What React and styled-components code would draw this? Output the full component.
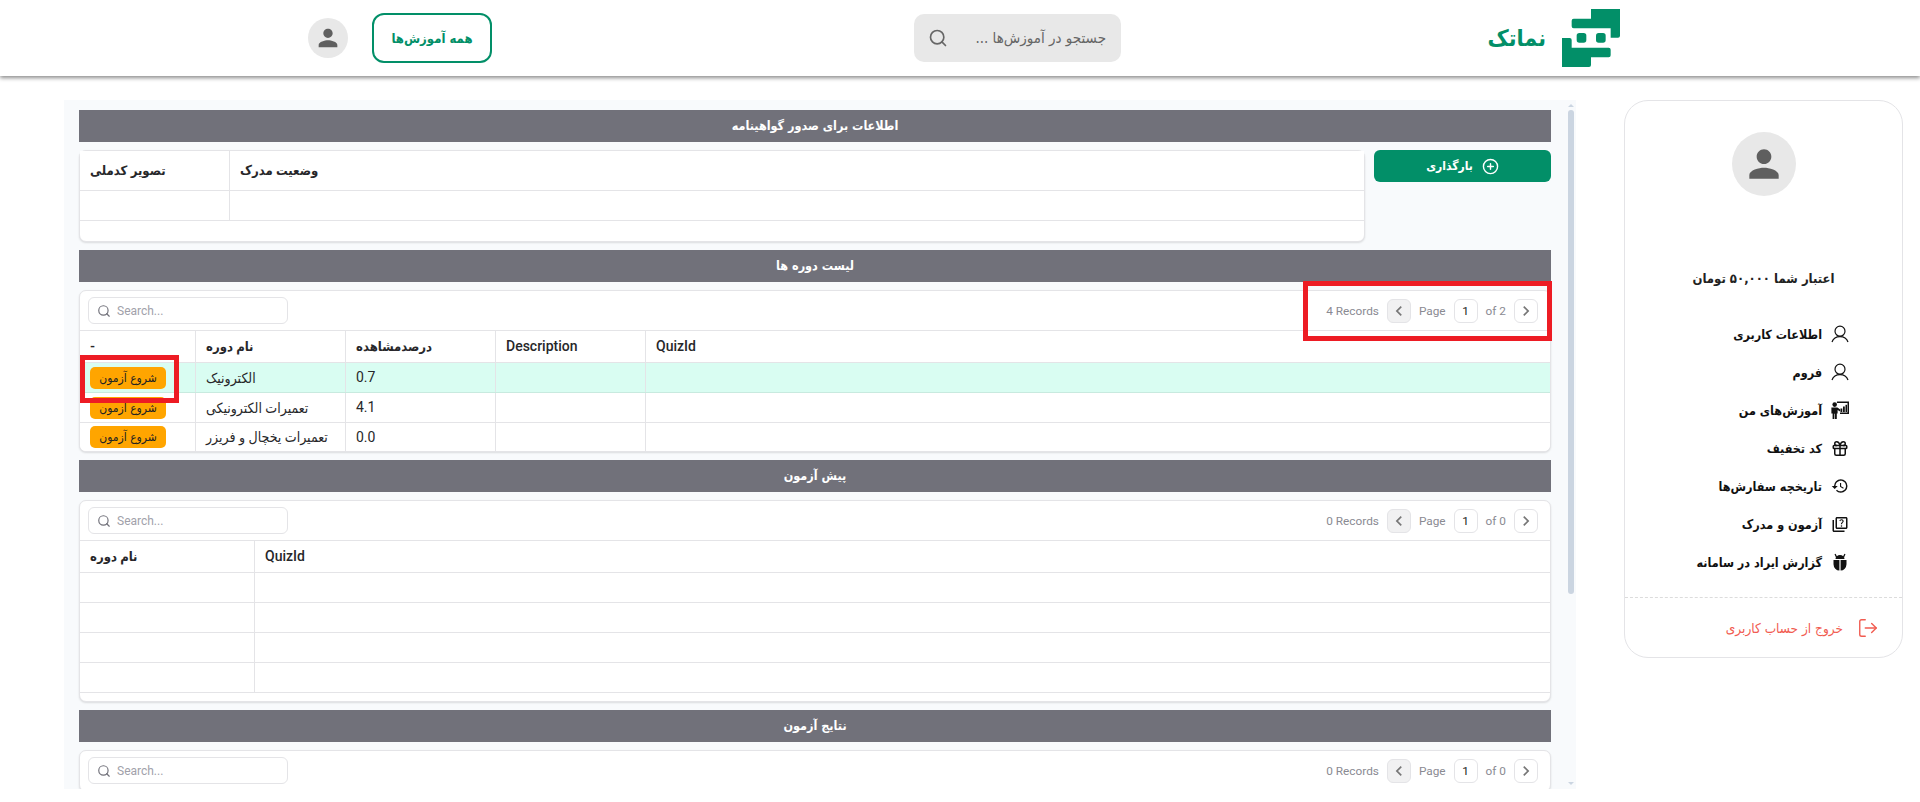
import React from 'react';
import styled, { createGlobalStyle } from 'styled-components';
import { MdPerson, MdHistory, MdOutlineQuiz, MdChevronLeft, MdChevronRight } from 'react-icons/md';
import { LuCirclePlus, LuSearch, LuLogOut, LuGift } from 'react-icons/lu';

const persian = '"DejaVu Sans Condensed", "DejaVu Sans", sans-serif';

const GlobalStyle = createGlobalStyle`
  html, body {
    margin: 0;
    height: 100%;
    overflow: hidden;
    background: #fff;
    font-family: Roboto, "DejaVu Sans Condensed", "DejaVu Sans", sans-serif;
  }
  * { box-sizing: border-box; }
`;

const Page = styled.div`
  height: 802px;
  display: flex;
  flex-direction: column;
`;

const TopBar = styled.header`
  height: 76px;
  flex: none;
  display: flex;
  align-items: center;
  padding: 0 300px 0 308px;
  background: #fff;
  box-shadow: 0 2px 4px rgba(0, 0, 0, 0.45);
  position: relative;
  z-index: 2;
`;

const Avatar = styled.div`
  width: ${p => p.$size}px;
  height: ${p => p.$size}px;
  border-radius: 50%;
  background: #e8e8e8;
  color: #5f5f5f;
  display: flex;
  align-items: center;
  justify-content: center;
  flex: none;
`;

const AllCourses = styled.button`
  width: 120px;
  height: 50px;
  margin-left: 24px;
  background: #fff;
  border: 2px solid #028f68;
  border-radius: 12px;
  color: #028f68;
  font: 700 13px ${persian};
  direction: rtl;
`;

const TopSearch = styled.div`
  width: 207px;
  height: 48px;
  margin-left: 422px;
  padding: 0 15px 0 14px;
  border-radius: 10px;
  background: #e8e8e8;
  color: #666;
  display: flex;
  align-items: center;
  justify-content: space-between;
  font: 400 15px ${persian};
  direction: ltr;
`;

const Brand = styled.div`
  margin-left: auto;
  display: flex;
  align-items: center;
  gap: 16px;
  color: #028f68;
  font: 700 23px ${persian};
`;

const Body = styled.div`
  flex: 1;
  min-height: 0;
  display: flex;
  align-items: flex-start;
  padding: 24px 17px 13px 64px;
  gap: 48px;
`;

const Panel = styled.main`
  width: 1512px;
  height: 689px;
  flex: none;
  display: flex;
  background: #f8fafc;
  overflow: hidden;
`;

const PanelContent = styled.div`
  width: 1504px;
  padding: 10px 17px 0 15px;
  display: flex;
  flex-direction: column;
  gap: 8px;
`;

const Scrollbar = styled.div`
  width: 8px;
  display: flex;
  flex-direction: column;
  align-items: center;
  justify-content: space-between;
  padding: 4px 0 4px;
  margin-left: -1px;
`;

const ScrollThumb = styled.div`
  width: 6px;
  height: 484px;
  margin-top: 3px;
  margin-bottom: auto;
  border-radius: 3px;
  background: #cbd5e1;
`;

const ScrollArrow = styled.div`
  width: 0;
  height: 0;
  border-left: 3px solid transparent;
  border-right: 3px solid transparent;
  ${p => (p.$down ? 'border-top: 3px solid #cbd5e1;' : 'border-bottom: 3px solid #cbd5e1;')}
`;

const SectionTitle = styled.div`
  height: 32px;
  flex: none;
  padding-bottom: 2px;
  background: #71717a;
  color: #fff;
  display: flex;
  align-items: center;
  justify-content: center;
  font: 700 12.500px ${persian};
  direction: rtl;
`;

const Row = styled.div`
  display: flex;
  gap: 9px;
  align-items: flex-start;
`;

const Card = styled.section`
  flex: ${p => (p.$fill ? '1' : 'none')};
  min-width: 0;
  position: relative;
  background: #fff;
  border: 1px solid #e4e4e7;
  border-radius: 7px;
  box-shadow: 0 1px 2px rgba(0, 0, 0, 0.12);
  padding-bottom: ${p => p.$pad || 0}px;
`;

const UploadButton = styled.button`
  width: 177px;
  height: 32px;
  flex: none;
  border: 0;
  border-radius: 6px;
  background: #028f68;
  color: #fff;
  display: flex;
  align-items: center;
  justify-content: center;
  gap: 9px;
  font: 700 12px ${persian};
  direction: rtl;
`;

const Toolbar = styled.div`
  height: 40px;
  padding: 0 12px 0 8px;
  display: flex;
  align-items: center;
  justify-content: space-between;
  border-bottom: 1px solid #e4e4e7;
`;

const SearchBox = styled.div`
  width: 200px;
  height: 27px;
  padding: 0 8px;
  display: flex;
  align-items: center;
  gap: 6px;
  background: #fff;
  border: 1px solid #e4e4e7;
  border-radius: 6px;
  color: #71717a;
  font-size: 12px;
`;

const SearchHint = styled.span`
  color: #a1a1aa;
`;

const Pager = styled.div`
  display: flex;
  align-items: center;
  gap: 8px;
  font-size: 11.800px;
  color: #8a8a92;
`;

const PageButton = styled.div`
  width: 24px;
  height: 24px;
  display: flex;
  align-items: center;
  justify-content: center;
  border: 1px solid #e4e4e7;
  border-radius: 6px;
  color: ${p => (p.$current ? '#222' : '#777')};
  background: ${p => (p.$disabled ? '#f1f1f2' : '#fff')};
`;

const TableRow = styled.div`
  display: grid;
  grid-template-columns: ${p => p.$cols};
  height: ${p => p.$height}px;
  background: ${p => (p.$active ? '#d9fdf2' : '#fff')};
  border-bottom: ${p => (p.$last ? '0' : `1px solid ${p.$active ? '#c8eadf' : '#e4e4e7'}`)};
  border-radius: ${p => (p.$last ? '0 0 6px 6px' : '0')};
`;

const Cell = styled.div`
  display: flex;
  align-items: center;
  padding: 0 10px ${p => (p.$latin ? '1px' : '0')};
  border-right: 1px solid #e4e4e7;
  color: #27272a;
  font-weight: ${p => (p.$bold ? 700 : 400)};
  font-size: ${p => (p.$bold ? '13px' : '14px')};
  white-space: nowrap;
  overflow: hidden;
  &:last-child { border-right: 0; }
`;

const LatinHead = styled(Cell)`
  font-weight: 500;
`;

const PersianCell = styled(Cell)`
  direction: rtl;
  justify-content: flex-end;
  border-right: 0;
  border-left: 0;
  box-shadow: inset -1px 0 0 #e4e4e7;
`;

const StartExam = styled.button`
  width: 76px;
  height: 22px;
  padding: 0;
  border: 0;
  border-radius: 5px;
  background: #ffa500;
  color: #222;
  font: 400 12px ${persian};
  direction: rtl;
  flex: none;
`;

const Highlight = styled.div`
  position: absolute;
  border: 5px solid #ed1c24;
  pointer-events: none;
  ${p => p.$area}
`;

const Sidebar = styled.aside`
  width: 279px;
  height: 558px;
  flex: none;
  border: 1px solid #e4e4e7;
  border-radius: 24px;
  display: flex;
  flex-direction: column;
  align-items: center;
  padding-top: 31px;
  direction: rtl;
`;

const Credit = styled.div`
  margin-top: 74px;
  font: 700 13px ${persian};
  color: #222;
  height: 18px;
  line-height: 18px;
`;

const Menu = styled.nav`
  width: 100%;
  margin-top: 35px;
  padding-right: 53px;
  display: flex;
  flex-direction: column;
  gap: 16px;
`;

const MenuItem = styled.a`
  height: 22px;
  display: flex;
  align-items: center;
  gap: 9px;
  color: #111;
  font: 700 12.500px ${persian};
`;

const MenuIcon = styled.span`
  width: 18px;
  height: 18px;
  flex: none;
  display: flex;
  align-items: center;
  justify-content: center;
`;

const Logout = styled.div`
  width: 100%;
  margin-top: 24px;
  padding-right: 23px;
  height: 61px;
  border-top: 1px dashed #dcdcdc;
  display: flex;
  align-items: center;
  gap: 14px;
  color: #f15b50;
  font: 400 13.500px ${persian};
`;

const BrandMark = () => (
  <svg width="58" height="58" viewBox="0 0 174 174" fill="#028f68">
    <path d="M87 0H174V80a6 6 0 0 1-6 6H146V58H35a6 6 0 0 1-6-6V35a6 6 0 0 1 6-6H87Z" />
    <path d="M0 87H23a6 6 0 0 1 6 6V116H140a6 6 0 0 1 6 6V139a6 6 0 0 1-6 6H87V168a6 6 0 0 1-6 6H0Z" />
    <rect x="44" y="72" width="29" height="29" rx="8" />
    <rect x="102" y="72" width="29" height="29" rx="8" />
  </svg>
);

const UserOutline = () => (
  <svg width="18" height="18" viewBox="0 0 18 18" fill="none" stroke="#111" strokeWidth="1.2">
    <circle cx="9" cy="6.200" r="5" />
    <path d="M1 17c1.200-3.400 4-5.400 8-5.400s6.800 2 8 5.400" />
  </svg>
);

const TeacherIcon = () => (
  <svg width="18" height="18" viewBox="0 0 18 18" fill="#111">
    <path d="M6 .5h12v12.500H9v-1.500h7.500V2H6Z" />
    <rect x="9.500" y="7.500" width="1.800" height="3.500" />
    <rect x="12" y="5.500" width="1.800" height="5.500" />
    <rect x="14.500" y="3.800" width="1.500" height="7.200" />
    <circle cx="3.700" cy="3.600" r="2.300" />
    <path d="M0.400 6.400H6.400L9.200 8.400V10.400L6.600 9V12.600H5.800V18H4V12.800H3.400V18H1.600V12.600H0.400Z" />
  </svg>
);

const BugIcon = () => (
  <svg width="18" height="18" viewBox="0 0 18 18" fill="#111">
    <path d="M4.500 6a4.500 4 0 0 1 9 0Z" />
    <path d="M3.500 1.200l1.100-.5 1.500 3-1.100.8ZM14.500 1.200l-1.100-.5-1.500 3 1.100.8Z" />
    <path d="M8.400 7H2.500v4.200A6 6.500 0 0 0 8.400 17.500ZM9.600 7h5.900v4.200A6 6.500 0 0 1 9.600 17.500Z" />
  </svg>
);

const menuItems = [
  { label: 'اطلاعات کاربری', icon: <UserOutline /> },
  { label: 'فروم', icon: <UserOutline /> },
  { label: 'آموزش‌های من', icon: <TeacherIcon /> },
  { label: 'کد تخفیف', icon: <LuGift size={21} color="#111" /> },
  { label: 'تاریخچه سفارش‌ها', icon: <MdHistory size={22} color="#111" /> },
  { label: 'آزمون و مدرک', icon: <MdOutlineQuiz size={21} color="#111" /> },
  { label: 'گزارش ایراد در سامانه', icon: <BugIcon /> },
];

const TableSearch = () => (
  <SearchBox>
    <LuSearch size={14} />
    <SearchHint>Search...</SearchHint>
  </SearchBox>
);

const Pagination = ({ records, pages }) => (
  <Pager>
    <span>{records} Records</span>
    <PageButton $disabled><MdChevronLeft size={20} /></PageButton>
    <span>Page</span>
    <PageButton $current>1</PageButton>
    <span>of {pages}</span>
    <PageButton><MdChevronRight size={20} /></PageButton>
  </Pager>
);

const courseCols = '116px 150px 150px 150px 1fr';
const quizCols = '175px 1fr';

const courses = [
  { name: 'الکترونیک', seen: '0.7', exam: 'شروع آزمون', active: true },
  { name: 'تعمیرات الکترونیکی', seen: '4.1', exam: 'شروع ازمون' },
  { name: 'تعمیرات یخچال و فریزر', seen: '0.0', exam: 'شروع آزمون', last: true },
];

function App() {
  return (
    <Page>
      <GlobalStyle />
      <TopBar>
        <Avatar $size={40}><MdPerson size={28} /></Avatar>
        <AllCourses>همه آموزش‌ها</AllCourses>
        <TopSearch>
          <LuSearch size={20} />
          <span dir="rtl">جستجو در آموزش‌ها ...</span>
        </TopSearch>
        <Brand>
          <span>نماتک</span>
          <BrandMark />
        </Brand>
      </TopBar>
      <Body>
        <Panel>
          <PanelContent>
            <SectionTitle>اطلاعات برای صدور گواهینامه</SectionTitle>
            <Row>
              <Card $fill $pad={20}>
                <TableRow $cols="150px 1fr" $height={40}>
                  <PersianCell $bold>تصویر کدملی</PersianCell>
                  <Cell $bold><span dir="rtl">وضعیت مدرک</span></Cell>
                </TableRow>
                <TableRow $cols="150px 1fr" $height={30}>
                  <Cell />
                  <Cell />
                </TableRow>
              </Card>
              <UploadButton>
                <LuCirclePlus size={17} />
                بارگذاری
              </UploadButton>
            </Row>

            <SectionTitle>لیست دوره ها</SectionTitle>
            <Card>
              <Toolbar>
                <TableSearch />
                <Pagination records={4} pages={2} />
              </Toolbar>
              <TableRow $cols={courseCols} $height={32}>
                <Cell $bold>-</Cell>
                <PersianCell $bold>نام دوره</PersianCell>
                <PersianCell $bold>درصدمشاهده</PersianCell>
                <LatinHead $latin>Description</LatinHead>
                <LatinHead $latin>QuizId</LatinHead>
              </TableRow>
              {courses.map(c => (
                <TableRow key={c.name} $cols={courseCols} $height={c.last ? 28 : 30} $active={c.active} $last={c.last}>
                  <Cell><StartExam>{c.exam}</StartExam></Cell>
                  <PersianCell>{c.name}</PersianCell>
                  <Cell $latin>{c.seen}</Cell>
                  <Cell />
                  <Cell />
                </TableRow>
              ))}
              <Highlight $area="left: 0; top: 64px; width: 99px; height: 48px;" />
              <Highlight $area="right: -2px; top: -10px; width: 249px; height: 60px;" />
            </Card>

            <SectionTitle>پیش آزمون</SectionTitle>
            <Card $pad={8}>
              <Toolbar>
                <TableSearch />
                <Pagination records={0} pages={0} />
              </Toolbar>
              <TableRow $cols={quizCols} $height={32}>
                <PersianCell $bold>نام دوره</PersianCell>
                <LatinHead $latin>QuizId</LatinHead>
              </TableRow>
              {[0, 1, 2, 3].map(i => (
                <TableRow key={i} $cols={quizCols} $height={30}>
                  <Cell />
                  <Cell />
                </TableRow>
              ))}
            </Card>

            <SectionTitle>نتایج آزمون</SectionTitle>
            <Card>
              <Toolbar>
                <TableSearch />
                <Pagination records={0} pages={0} />
              </Toolbar>
            </Card>
          </PanelContent>
          <Scrollbar>
            <ScrollArrow />
            <ScrollThumb />
            <ScrollArrow $down />
          </Scrollbar>
        </Panel>
        <Sidebar>
          <Avatar $size={64}><MdPerson size={44} /></Avatar>
          <Credit>اعتبار شما ۵۰,۰۰۰ تومان</Credit>
          <Menu>
            {menuItems.map(m => (
              <MenuItem key={m.label}>
                <MenuIcon>{m.icon}</MenuIcon>
                {m.label}
              </MenuItem>
            ))}
          </Menu>
          <Logout>
            <LuLogOut size={22} strokeWidth={1.5} />
            خروج از حساب کاربری
          </Logout>
        </Sidebar>
      </Body>
    </Page>
  );
}

export default App;
